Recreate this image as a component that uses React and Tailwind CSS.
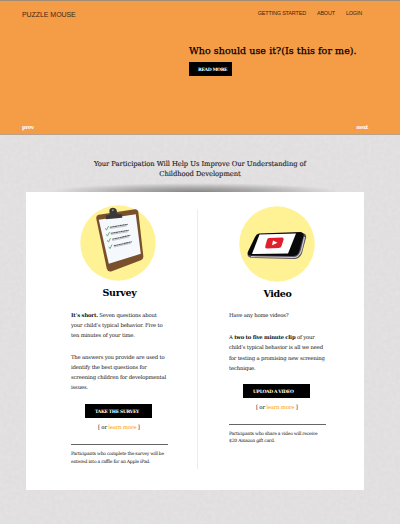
import React from "react";

const slab = "font-['DejaVu_Serif',serif]";

function Texture() {
  return (
    <svg className="absolute inset-0 h-full w-full opacity-15" aria-hidden="true">
      <filter id="paper">
        <feTurbulence type="fractalNoise" baseFrequency="0.25" numOctaves="3" seed="4" />
        <feColorMatrix values="0.4 0 0 0 0.65  0.4 0 0 0 0.64  0.4 0 0 0 0.65  0 0 0 0 1" />
      </filter>
      <rect width="100%" height="100%" filter="url(#paper)" />
    </svg>
  );
}

function Clipboard() {
  return (
    <svg width="76" height="76" viewBox="0 0 76 76" className="block">
      <circle cx="38" cy="38" r="37.7" fill="#fff294" />
      <g transform="translate(.8 .8)">
        <path d="M18 9 L54 3.500 Q57 3 57.500 6 L62.500 50 Q63 53 60 54.500 L31 65.500 Q27 66.500 26 63 L15.500 13 Q15 9.500 18 9Z" fill="#79502b" />
        <path d="M18 14 L55 8.500 L60 48 L28 58Z" fill="#f5f8fd" />
        <path d="M25 13.500 L25 10 L29 8.500 Q27 2 32 2 Q37 2 36 8 L41 8.500 L41.500 12Z" fill="#3a3839" />
        <circle cx="32" cy="4.500" r="1" fill="#9b8c75" />
        <g fill="none" stroke="#6eac70" strokeWidth="1">
          <path d="M24.500 22.500 l1.200 1.800 2-4" />
          <path d="M25.500 28.500 l1.200 1.800 2-4" />
          <path d="M26.500 34.500 l1.200 1.800 2-4" />
          <path d="M28 41 l1.200 1.800 2-4" />
        </g>
        <g fill="none" stroke="#555960" strokeWidth="1.100" strokeDasharray="2.200 .3">
          <path d="M29 21.500 L47 18.500 M30 27.500 L48 24.500 M31.500 33.500 L49.500 29.500 M33 40 L51 36" />
        </g>
        <g fill="none" stroke="#a8abb0" strokeWidth=".7">
          <path d="M29 22.700 L46 20 M30 28.700 L47 26 M31.500 34.700 L48.500 31 M33 41.200 L50 37.500" />
        </g>
      </g>
    </svg>
  );
}

function Phone() {
  return (
    <svg width="76" height="76" viewBox="0 0 76 76" className="block">
      <circle cx="38" cy="38" r="37.700" fill="#fff294" />
      <path d="M21 28 L63 27 Q68 27.500 67 32 L63 47 Q61 52.500 56 53 L13 52 Q7 51 9 47Z" fill="#59525f" />
      <path d="M12 50.700 L56 51.500 Q60.500 50.500 62.500 44 L65.500 31" fill="none" stroke="#d1cbd2" strokeWidth="1.200" />
      <path d="M20 27.500 L61 26 Q65.500 26.500 64.500 30 L60 46 Q58 50.200 54 50 L11 49.500 Q7.500 49 9 45.500 L16 31 Q17.500 27.800 20 27.500Z" fill="#09090b" />
      <path d="M20.500 28.500 L57 27.500 L49 47.500 L13 48Z" fill="white" />
      <path d="M30 32 L43 31.500 Q45 31.500 44.500 34 L42.500 40 Q42 42 39.500 42 L28 42.500 Q25.500 42.500 26.500 39.500 L28 34 Q28.500 32 30 32Z" fill="#df1f2d" />
      <path d="M34 34.500 L38.500 36.800 L33 39.300Z" fill="white" />
    </svg>
  );
}

function Heading({ children }) {
  return (
    <h2 className="h-[14px] text-center text-[9.500px] leading-[14px] font-bold tracking-[-0.35px] text-black">
      {children}
    </h2>
  );
}

function Action({ label, className }) {
  return (
    <div className={className}>
      <button className="block h-[14px] w-[67px] bg-black pl-[10px] text-left text-[4.500px] leading-[13px] font-bold tracking-[-0.34px] whitespace-nowrap text-white">
        {label}
      </button>
      <p className="mt-[4px] ml-[13px] h-[10px] text-[5.500px] leading-[10px] tracking-[-0.27px] whitespace-nowrap">
        [ or <a className="text-[#ff9d10]">learn more</a> ]
      </p>
    </div>
  );
}

export default function App() {
  return (
    <div className={`relative h-[524px] w-[400px] overflow-hidden bg-[#e0dedf] text-[#111] ${slab}`}>
      <Texture />
      <div className="relative flex h-full flex-col">
        <header className="flex h-[135px] shrink-0 flex-col border-t border-b border-t-[#a28c76] border-b-[#b9a18c] bg-[#f59c46] px-[22px]">
          <nav className="flex h-[29px] w-[346px] shrink-0 border-b border-[#d9a373] font-['Liberation_Sans',sans-serif] text-[#3b2815]">
            <span className="mt-[8px] text-[7px] leading-[11px] whitespace-nowrap tracking-[-0.06px]">PUZZLE MOUSE</span>
            <div className="mt-[7px] mr-[6px] ml-auto flex gap-[11px] text-[5.500px] leading-[11px] whitespace-nowrap tracking-[-0.2px]">
              <span>GETTING STARTED</span>
              <span>ABOUT</span>
              <span>LOGIN</span>
            </div>
          </nav>
          <section className="mt-[14px] ml-[167px]">
            <h1 className="text-[9.500px] leading-[14px] font-medium tracking-[0.06px] whitespace-nowrap text-black [-webkit-text-stroke:0.25px_black]">
              Who should use it?(Is this for me).
            </h1>
            <button className="mt-[4px] block h-[14px] w-[43px] bg-black pl-[9px] text-left text-[4.500px] leading-[13px] font-bold tracking-[-0.34px] whitespace-nowrap text-white">
              READ MORE
            </button>
          </section>
          <div className="mt-auto mb-[2px] flex w-[346px] justify-between text-[5.500px] leading-[10px] font-bold tracking-[-0.4px] text-white">
            <a>prev</a>
            <a>next</a>
          </div>
        </header>

        <p className="mt-[24px] h-[20px] shrink-0 text-center text-[6.800px] leading-[10px] tracking-[-0.07px] whitespace-nowrap text-[#222] [-webkit-text-stroke:0.12px_#222]">
          Your Participation Will Help Us Improve Our Understanding of
          <br />
          Childhood Development
        </p>

        <div className="mt-[4px] ml-[50px] h-[9px] w-[290px] shrink-0 bg-[radial-gradient(ellipse_50%_100%_at_50%_100%,#858585_0%,#aaa9a9_45%,transparent_100%)]" />

        <main className="ml-[26px] flex h-[298px] w-[338px] shrink-0 bg-white">
          <section className="w-[171px] pt-[13px] pl-[45px]">
            <div className="ml-[9px]">
              <Clipboard />
            </div>
            <div className="mt-[5px] w-[97px]">
              <Heading>Survey</Heading>
            </div>
            <div className="mt-[10px] text-[5.300px] leading-[10.200px] tracking-[-0.16px] whitespace-nowrap">
              <p><b className="tracking-[-0.2px]">It’s short.</b> Seven questions about<br />your child’s typical behavior. Five to<br />ten minutes of your time.</p>
              <p className="mt-[11px]">The answers you provide are used to<br />identify the best questions for<br />screening children for developmental<br />issues.</p>
            </div>
            <Action label="TAKE THE SURVEY" className="mt-[12px] ml-[14px]" />
            <p className="mt-[12px] w-[97px] border-t border-[#666] pt-[5px] text-[4.500px] leading-[7.200px] tracking-[-0.22px] whitespace-nowrap">
              Participants who complete the survey will be<br />entered into a raffle for an Apple iPad.
            </p>
          </section>
          <div className="mt-[17px] h-[260px] w-px bg-[#ededed]" />
          <section className="w-[166px] pt-[14px] pl-[31px]">
            <div className="ml-[10px]">
              <Phone />
            </div>
            <div className="mt-[5px] w-[97px]">
              <Heading>Video</Heading>
            </div>
            <div className="mt-[9px] text-[5.300px] leading-[10.200px] tracking-[-0.18px] whitespace-nowrap">
              <p>Have any home videos?</p>
              <p className="mt-[12px]">A <b className="tracking-[-0.24px]">two to five minute clip</b> of your<br />child’s typical behavior is all we need<br />for testing a promising new screening<br />technique.</p>
            </div>
            <Action label="UPLOAD A VIDEO" className="mt-[11px] ml-[14px]" />
            <p className="mt-[12px] w-[97px] border-t border-[#666] pt-[5px] text-[4.500px] leading-[7.200px] tracking-[-0.22px] whitespace-nowrap">
              Participants who share a video will receive<br />$20 Amazon gift card.
            </p>
          </section>
        </main>
      </div>
    </div>
  );
}
